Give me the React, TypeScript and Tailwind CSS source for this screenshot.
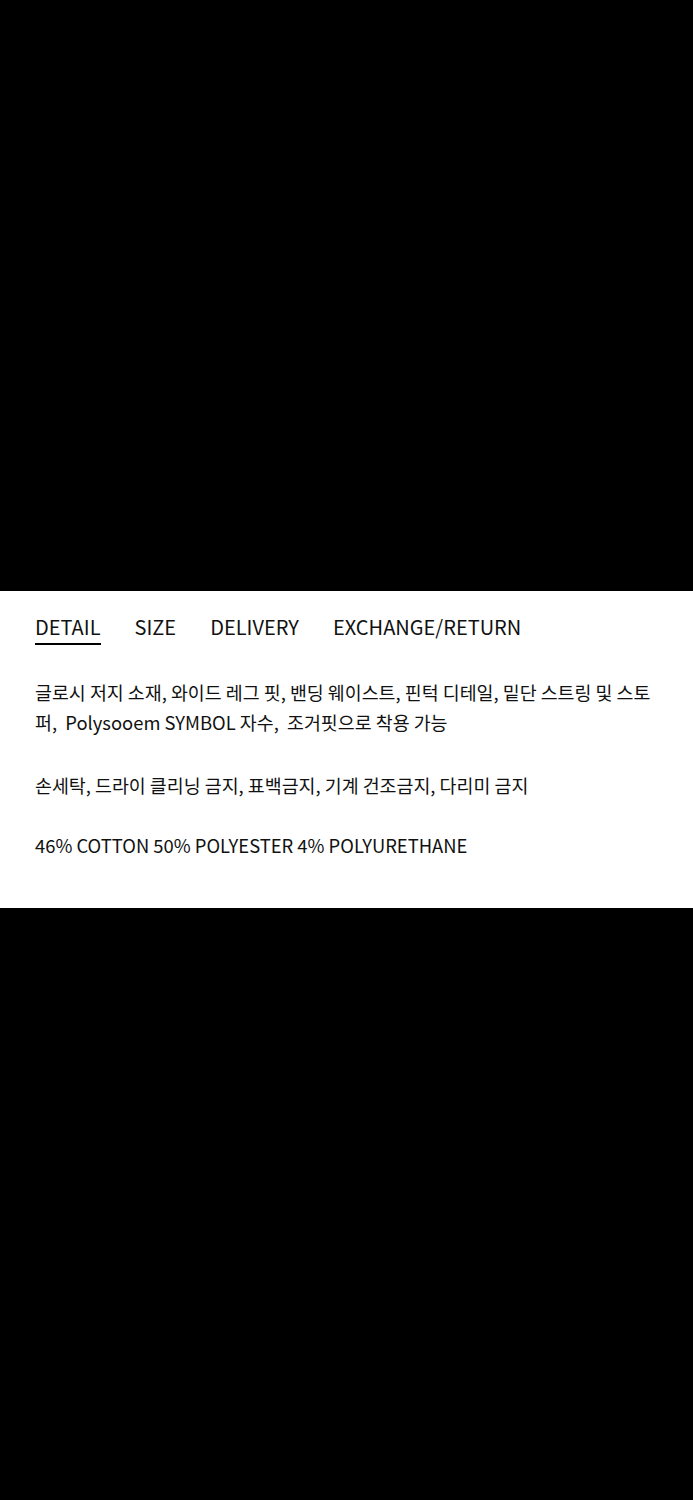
const tabs = ["DETAIL", "SIZE", "DELIVERY", "EXCHANGE/RETURN"];

export default function App() {
  return (
    <div
      className="min-h-[1500px] bg-black"
      style={{ fontFamily: '"Noto Sans CJK KR", "Noto Sans", sans-serif' }}
    >
      <div className="h-[591px]" />
      <section className="h-[317px] bg-white px-[35px] pt-[22px] text-[#111]">
        <ul className="flex gap-[34px]">
          {tabs.map((tab, i) => (
            <li key={tab} className="flex flex-col">
              <span className="text-[20px] leading-[28px]">{tab}</span>
              <span className={i === 0 ? "mt-[2px] h-[2px] bg-black" : "mt-[2px] h-[2px]"} />
            </li>
          ))}
        </ul>
        <div className="mt-[32px] text-[18.4px] leading-[30px]">
          <p>
            글로시 저지 소재, 와이드 레그 핏, 밴딩 웨이스트, 핀턱 디테일, 밑단 스트링 및 스토퍼,&nbsp; Polysooem SYMBOL 자수,&nbsp; 조거핏으로 착용 가능
          </p>
          <p className="mt-[33px]">손세탁, 드라이 클리닝 금지, 표백금지, 기계 건조금지, 다리미 금지</p>
          <p className="mt-[30px]">46% COTTON 50% POLYESTER 4% POLYURETHANE</p>
        </div>
      </section>
    </div>
  );
}
